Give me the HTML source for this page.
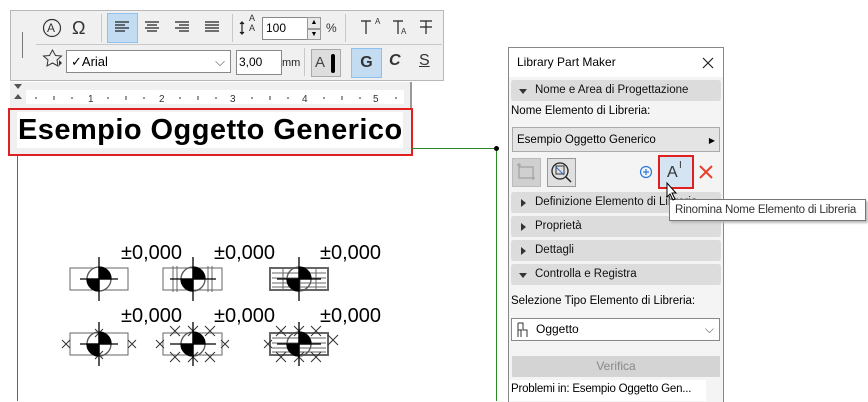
<!DOCTYPE html>
<html><head><meta charset="utf-8"><style>
body{margin:0;width:868px;height:401px;overflow:hidden;background:#fff;font-family:"Liberation Sans",sans-serif;position:relative}
.a{position:absolute;white-space:nowrap}
.sec{position:absolute;left:511px;width:210px;height:21px;background:#dcdcdc;border-radius:3px;font-size:11.5px;line-height:21px;color:#111;white-space:nowrap;overflow:hidden}
.sec span{position:absolute;left:24px}
.tri{position:absolute;left:10px;top:7px;width:0;height:0}
.tr{border-left:5px solid #333;border-top:4px solid transparent;border-bottom:4px solid transparent}
.td{border-top:5px solid #333;border-left:4px solid transparent;border-right:4px solid transparent;top:9px;left:8px}
</style></head><body>
<!-- toolbar -->
<div class="a" style="left:10px;top:10px;width:432px;height:69px;background:#f0f0f0;border:1px solid #b8b8b8"></div>
<div class="a" style="left:107px;top:13px;width:29px;height:28px;background:#c4dcf2;border:1px solid #8cc0ee"></div>
<div class="a" style="left:22px;top:32px;width:1px;height:26px;background:#777"></div>
<div class="a" style="left:36px;top:44px;width:406px;height:1px;background:#c8c8c8"></div>
<div class="a" style="left:101px;top:14px;width:1px;height:28px;background:#c8c8c8"></div>
<div class="a" style="left:232px;top:14px;width:1px;height:28px;background:#c8c8c8"></div>
<div class="a" style="left:345px;top:14px;width:1px;height:28px;background:#c8c8c8"></div>
<div class="a" style="left:304px;top:48px;width:1px;height:28px;background:#c8c8c8"></div>
<svg class="a" style="left:0;top:0" width="450" height="90">
<circle cx="52" cy="28" r="8.5" fill="none" stroke="#333" stroke-width="1.2"/>
<text x="47" y="32" font-size="12" font-family="Liberation Sans" fill="#333">A</text>
<text x="72" y="34" font-size="18" font-family="Liberation Sans" fill="#333">Ω</text>
<g stroke="#222" stroke-width="1.2">
<path d="M115 22h14M115 25h10M115 28h14M115 31h10"/>
<path d="M145 22h14M147 25h10M145 28h14M147 31h10"/>
<path d="M175 22h14M179 25h10M175 28h14M179 31h10"/>
<path d="M205 22h14M205 25h14M205 28h14M205 31h14"/>
<path d="M242 22v12M240 24l2-2 2 2M240 32l2 2 2-2"/>
<path d="M361 21h10M366 21v13M393 21h10M398 21v13M420 21h12M426 21v13M420 27h12"/>
</g>
<path d="M58 66l-5.5-3 -5.5 3 1-6 -4.5-4 6-.5 3-5.5 3 5.5 6 .5 -4.5 4 1 6z" fill="none" stroke="#333"/>
<path d="M59 60l3 3-3 3z" fill="#333"/>
</svg>
<div class="a" style="left:249px;top:13px;font-size:9px;color:#333;line-height:10px">A<br>A</div>
<div class="a" style="left:262px;top:17px;width:42px;height:21px;background:#fff;border:1px solid #888;font-size:12px;line-height:21px;padding-left:3px">100</div>
<div class="a" style="left:307px;top:17px;width:12px;height:10px;border:1px solid #999;background:#e8e8e8;font-size:7px;text-align:center;line-height:10px">▲</div>
<div class="a" style="left:307px;top:29px;width:12px;height:9px;border:1px solid #999;background:#e8e8e8;font-size:7px;text-align:center;line-height:9px">▼</div>
<div class="a" style="left:326px;top:21px;font-size:12px;color:#333">%</div>
<div class="a" style="left:375px;top:17px;font-size:8px;color:#333">A</div>
<div class="a" style="left:401px;top:27px;font-size:8px;color:#333">A</div>
<div class="a" style="left:66px;top:50px;width:159px;height:21px;background:#fff;border:1px solid #888;font-size:13px;line-height:21px;padding-left:4px">✓Arial<span style="position:absolute;right:5px;color:#555">⌵</span></div>
<div class="a" style="left:236px;top:50px;width:42px;height:23px;background:#fff;border:1px solid #888;font-size:12px;line-height:23px;padding-left:2px">3,00</div>
<div class="a" style="left:282px;top:57px;font-size:11px;color:#222">mm</div>
<div class="a" style="left:311px;top:49px;width:25px;height:26px;background:#ddd;border:1px solid #aaa;font-size:15px;line-height:26px;padding-left:3px;color:#444">A<span style="position:absolute;left:19px;top:4px;width:4px;height:19px;background:#000;border-radius:2px"></span></div>
<div class="a" style="left:351px;top:48px;width:29px;height:28px;background:#c4dcf2;border:1px solid #8cc0ee;font-size:16px;font-weight:bold;text-align:center;line-height:28px;color:#333">G</div>
<div class="a" style="left:389px;top:52px;font-size:16px;font-weight:bold;font-style:italic;color:#333">C</div>
<div class="a" style="left:419px;top:52px;font-size:16px;text-decoration:underline;color:#333">S</div>
<!-- ruler -->
<div class="a" style="left:10px;top:82px;width:400px;height:26px;background:#f0f0f0;border-right:2px solid #999"></div>
<div class="a" style="left:26px;top:90px;width:378px;height:14px;background:#fff"></div>
<svg class="a" style="left:0;top:80px" width="420" height="30">
<path d="M14 4h8l-4 5zM14 19h8l-4-5z" fill="#555"/>
<g fill="#333" font-size="10" font-family="Liberation Sans">
<text x="88" y="22">1</text><text x="159" y="22">2</text><text x="230" y="22">3</text><text x="302" y="22">4</text><text x="373" y="22">5</text></g>
<g stroke="#333"><path d="M36 17v2M54 16v4M72 17v2M108 17v2M126 16v4M144 17v2M180 17v2M198 16v4M216 17v2M252 17v2M270 16v4M288 17v2M324 17v2M342 16v4M360 17v2M396 17v2"/></g>
</svg>
<!-- text box -->
<div class="a" style="left:8px;top:108px;width:401px;height:44px;border:2px solid #e02020;background:#f0f0f0"></div>
<div class="a" style="left:17px;top:112px;width:385px;height:36px;background:#fff;font-size:29px;letter-spacing:0.45px;font-weight:bold;line-height:36px;padding-left:1px;overflow:hidden">Esempio Oggetto Generico</div>
<!-- green lines -->
<div class="a" style="left:17px;top:155px;width:1px;height:246px;background:#2a8a2a"></div>
<div class="a" style="left:412px;top:148px;width:85px;height:1px;background:#2a8a2a"></div>
<div class="a" style="left:496px;top:148px;width:1px;height:253px;background:#2a8a2a"></div>
<div class="a" style="left:494px;top:146px;width:5px;height:5px;border-radius:50%;background:#000"></div>
<!-- symbols -->
<svg class="a" style="left:0;top:0" width="500" height="401">
<g font-family="Liberation Sans" font-size="20" fill="#000">
<text x="121" y="259">±0,000</text><text x="214" y="259">±0,000</text><text x="320" y="259">±0,000</text>
<text x="121" y="322">±0,000</text><text x="214" y="322">±0,000</text><text x="320" y="322">±0,000</text></g>
<g stroke="#666" fill="none" stroke-width="1">
<rect x="70" y="268" width="58" height="22"/><rect x="163" y="268" width="59" height="22"/>
<rect x="270" y="268" width="58" height="22" stroke-width="2"/><path d="M272 273h54M272 278h54M272 283h54M272 287h54M283 268v22M300 268v22M316 268v22"/>
<path d="M173 266v26M177 266v26M208 266v26M212 266v26"/>
<rect x="70" y="333" width="58" height="22"/><rect x="163" y="333" width="59" height="22"/>
<rect x="270" y="333" width="58" height="22" stroke-width="2"/><path d="M272 338h54M272 343h54M272 348h54M272 352h54"/>
</g>
<g stroke="#333" stroke-width="1">
<path d="M62 340l8 8M62 348l8-8M128 340l8 8M128 348l8-8M95 329l8 8M95 337l8-8M95 351l8 8M95 359l8-8"/>
<path d="M156 340l8 8M156 348l8-8M221 340l8 8M221 348l8-8M170 326l10 10M170 336l10-10M188 326l10 10M188 336l10-10M205 326l10 10M205 336l10-10M170 352l10 10M170 362l10-10M188 352l10 10M188 362l10-10M205 352l10 10M205 362l10-10"/>
<path d="M264 340l8 8M264 348l8-8M328 335l10 10M328 345l10-10M276 326l10 10M276 336l10-10M294 326l10 10M294 336l10-10M311 326l10 10M311 336l10-10M276 352l10 10M276 362l10-10M294 352l10 10M294 362l10-10M311 352l10 10M311 362l10-10"/>
</g>
<g stroke="#000" stroke-width="1.3">
<circle cx="99" cy="279" r="12" fill="#fff" stroke="#555"/><path d="M99 267a12 12 0 0 1 12 12h-12zM99 291a12 12 0 0 1 -12-12h12z" fill="#000"/><path d="M99 257v44M80 279h38"/>
<circle cx="193" cy="279" r="12" fill="none" stroke="#555"/><path d="M193 267a12 12 0 0 1 12 12h-12zM193 291a12 12 0 0 1 -12-12h12z" fill="#000"/><path d="M193 257v44M170 279h46"/>
<circle cx="299" cy="279" r="12" fill="none" stroke="#555"/><path d="M299 267a12 12 0 0 1 12 12h-12zM299 291a12 12 0 0 1 -12-12h12z" fill="#000"/><path d="M299 257v44M277 279h44"/>
<circle cx="99" cy="344" r="12" fill="none" stroke="#555"/><path d="M99 332a12 12 0 0 1 12 12h-12zM99 356a12 12 0 0 1 -12-12h12z" fill="#000"/><path d="M99 322v44M80 344h38"/>
<circle cx="193" cy="344" r="12" fill="none" stroke="#555"/><path d="M193 332a12 12 0 0 1 12 12h-12zM193 356a12 12 0 0 1 -12-12h12z" fill="#000"/><path d="M193 322v44M170 344h46"/>
<circle cx="299" cy="344" r="12" fill="none" stroke="#555"/><path d="M299 332a12 12 0 0 1 12 12h-12zM299 356a12 12 0 0 1 -12-12h12z" fill="#000"/><path d="M299 322v44M277 344h44"/>
</g>
</svg>
<!-- panel -->
<div class="a" style="left:508px;top:47px;width:214px;height:354px;background:#f4f4f4;border:1px solid #888;border-bottom:none"></div>
<div class="a" style="left:509px;top:48px;width:214px;height:29px;background:#fff"></div>
<div class="a" style="left:517px;top:55px;font-size:12px">Library Part Maker</div>
<svg class="a" style="left:702px;top:57px" width="12" height="12"><path d="M1 1l10 10M11 1L1 11" stroke="#222" stroke-width="1.2"/></svg>
<div class="sec" style="top:80px"><div class="tri td"></div><span>Nome e Area di Progettazione</span></div>
<div class="a" style="left:511px;top:105px;font-size:11.5px">Nome Elemento di Libreria:</div>
<div class="a" style="left:512px;top:127px;height:25px;background:#e4e4e4;border:1px solid #aaa;font-size:11.5px;line-height:25px;padding-left:4px;box-sizing:border-box;width:208px">Esempio Oggetto Generico<span style="position:absolute;right:4px;font-size:8px">▶</span></div>
<div class="a" style="left:512px;top:158px;width:27px;height:27px;background:#d0d0d0;border:1px solid #bbb"></div>
<svg class="a" style="left:512px;top:158px" width="28" height="28"><rect x="7" y="9" width="14" height="11" fill="none" stroke="#999"/><path d="M5 7h4M7 5v4M19 20h4M21 18v4" stroke="#999"/></svg>
<div class="a" style="left:547px;top:158px;width:27px;height:27px;background:#e0e0e0;border:1px solid #999"></div>
<svg class="a" style="left:547px;top:158px" width="28" height="28"><circle cx="13" cy="13" r="8" fill="none" stroke="#222" stroke-width="1.3"/><rect x="9" y="8" width="8" height="8" fill="none" stroke="#333"/><path d="M9 9l8 8" stroke="#3070d0"/><path d="M19 19l5 5" stroke="#222" stroke-width="1.5"/></svg>
<svg class="a" style="left:639px;top:165px" width="14" height="14"><circle cx="7" cy="7" r="5.5" fill="none" stroke="#2a7ae2" stroke-width="1.2"/><path d="M7 4v6M4 7h6" stroke="#2a7ae2" stroke-width="1.2"/></svg>
<div class="a" style="left:658px;top:155px;width:32px;height:30px;border:2px solid #e02020;background:#d4e4f2"></div>
<div class="a" style="left:667px;top:164px;font-size:16px;color:#333">A</div>
<div class="a" style="left:679px;top:160px;font-size:10px;color:#333">I</div>
<svg class="a" style="left:699px;top:165px" width="14" height="14"><path d="M1 1l12 12M13 1L1 13" stroke="#e8402a" stroke-width="2"/></svg>
<div class="sec" style="top:192px"><div class="tri tr"></div><span>Definizione Elemento di Libreria</span></div>
<div class="sec" style="top:216px"><div class="tri tr"></div><span>Proprietà</span></div>
<div class="sec" style="top:240px"><div class="tri tr"></div><span>Dettagli</span></div>
<div class="sec" style="top:264px"><div class="tri td"></div><span>Controlla e Registra</span></div>
<div class="a" style="left:669px;top:199px;width:197px;height:22px;background:#fff;border:1px solid #777;box-shadow:2px 2px 2px #bbb;font-size:11.5px;line-height:20px;padding-left:5px;box-sizing:border-box;color:#333;overflow:hidden;letter-spacing:-0.2px">Rinomina Nome Elemento di Libreria</div>
<svg class="a" style="left:666px;top:182px" width="14" height="20"><path d="M1 1v14l3-3 3 6 2-1-3-6h4z" fill="#fff" stroke="#000"/></svg>
<div class="a" style="left:511px;top:295px;font-size:11.5px">Selezione Tipo Elemento di Libreria:</div>
<div class="a" style="left:511px;top:318px;width:209px;height:23px;background:#fff;border:1px solid #888;box-sizing:border-box;font-size:12px;line-height:21px;padding-left:24px">Oggetto<span style="position:absolute;right:5px;color:#555">⌵</span></div>
<svg class="a" style="left:515px;top:321px" width="14" height="17"><path d="M3 2h5v7h4v7M3 2v14M6 9v7M3 9h4" fill="none" stroke="#333"/></svg>
<div class="a" style="left:512px;top:356px;width:208px;height:21px;background:#d4d4d4;font-size:12px;line-height:21px;text-align:center;color:#888">Verifica</div>
<div class="a" style="left:509px;top:380px;width:197px;height:21px;background:#fff;font-size:11.5px;line-height:18px;padding-left:2px;box-sizing:border-box;overflow:hidden;letter-spacing:-0.2px">Problemi in: Esempio Oggetto Gen...</div>
</body></html>
